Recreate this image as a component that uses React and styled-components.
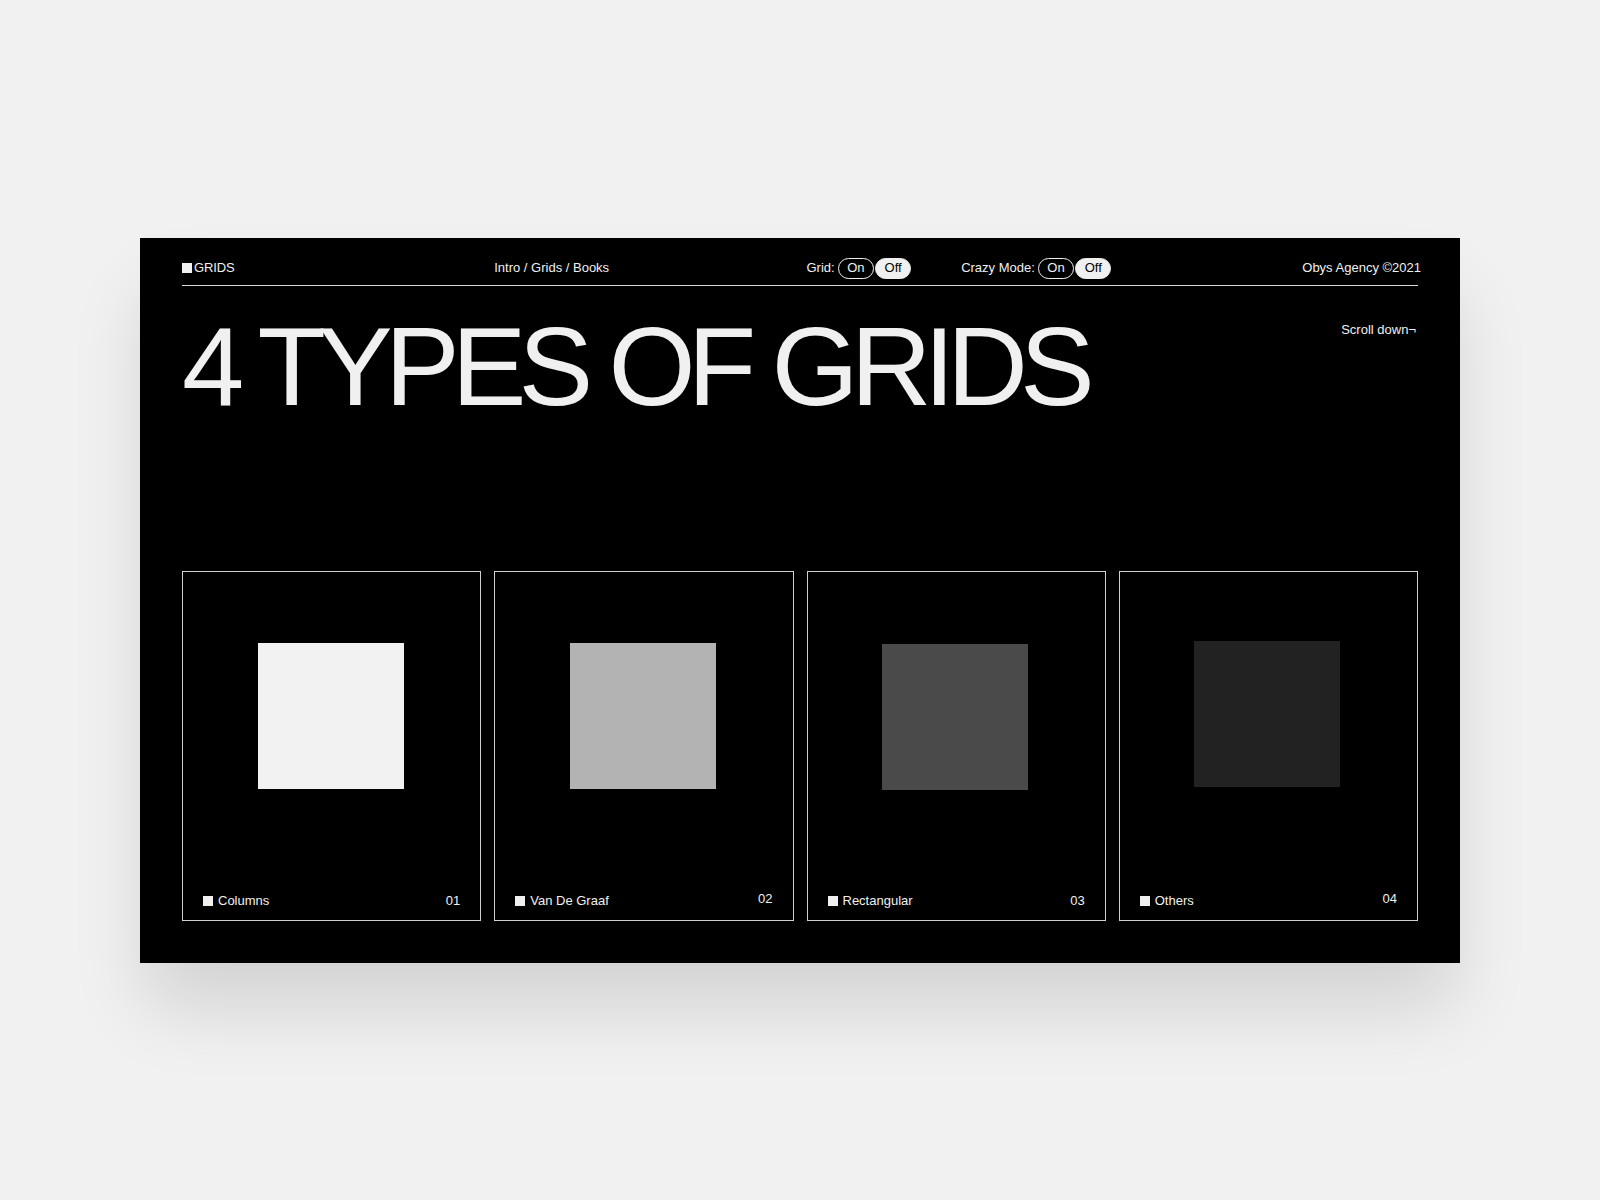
import React from "react";
import styled, { createGlobalStyle } from "styled-components";

const GlobalStyle = createGlobalStyle`
  html, body {
    margin: 0;
    padding: 0;
    background: #f1f1f1;
  }
  body {
    font-family: "Liberation Sans", Arial, Helvetica, sans-serif;
    -webkit-font-smoothing: antialiased;
  }
`;

const Page = styled.div`
  min-height: 1200px;
  display: flex;
  align-items: center;
  justify-content: center;
`;

const Panel = styled.section`
  width: 1320px;
  height: 725px;
  box-sizing: border-box;
  background: #000;
  color: #f0f0f0;
  padding: 0 42px 42px;
  display: flex;
  flex-direction: column;
  box-shadow: 0 50px 70px -6px rgba(0, 0, 0, 0.13);
`;

const Header = styled.header`
  display: grid;
  grid-template-columns: repeat(4, minmax(0, 1fr));
  column-gap: 13px;
  align-items: center;
  padding: 20px 0 6px;
  border-bottom: 1px solid #d8d8d8;
  font-size: 13px;
  line-height: 16px;
  white-space: nowrap;
`;

const Brand = styled.div`
  display: flex;
  align-items: center;
  gap: 2px;
  letter-spacing: -0.1px;
`;

const Mark = styled.span`
  display: inline-block;
  width: ${(p) => p.$size || 10}px;
  height: ${(p) => p.$size || 10}px;
  background: #f0f0f0;
`;

const Crumbs = styled.div``;

const Toggles = styled.div`
  display: flex;
  align-items: center;
  gap: 50px;
`;

const Toggle = styled.div`
  display: flex;
  align-items: center;
  gap: 3px;
`;

const Switch = styled.div`
  display: flex;
  align-items: center;
`;

const Pill = styled.span`
  display: inline-flex;
  align-items: center;
  justify-content: center;
  box-sizing: border-box;
  height: 21px;
  padding: 0 8.5px;
  border-radius: 11px;
  border: 1.5px solid #f0f0f0;
  background: ${(p) => (p.$active ? "#f0f0f0" : "transparent")};
  color: ${(p) => (p.$active ? "#000" : "#f0f0f0")};
  margin-left: ${(p) => (p.$active ? "1px" : "0")};
`;

const Credit = styled.div`
  text-align: right;
  margin-right: -3px;
`;

const TitleRow = styled.div`
  display: flex;
  justify-content: space-between;
  align-items: flex-start;
  margin-top: 25px;
`;

const Title = styled.h1`
  margin: 0;
  font-weight: 400;
  font-size: 112px;
  line-height: 1;
  letter-spacing: -7.9px;
  color: #f0f0f0;
  white-space: nowrap;
`;

const Scroll = styled.div`
  margin-top: 11px;
  margin-right: 2px;
  font-size: 13px;
  line-height: 16px;
`;

const Cards = styled.div`
  display: grid;
  grid-template-columns: repeat(4, minmax(0, 1fr));
  column-gap: 13px;
  margin-top: auto;
`;

const Card = styled.article`
  height: 350px;
  box-sizing: border-box;
  border: 1.5px solid #cfcfcf;
  padding: 71px 20px 11px;
  display: flex;
  flex-direction: column;
`;

const Swatch = styled.div`
  align-self: center;
  width: 146px;
  height: 146px;
  background: ${(p) => p.$color};
  transform: translate(-1px, ${(p) => p.$shift || 0}px);
`;

const Label = styled.div`
  margin-top: auto;
  display: flex;
  align-items: center;
  justify-content: space-between;
  font-size: 13px;
  line-height: 16px;
`;

const Name = styled.span`
  display: flex;
  align-items: center;
  gap: 5px;
`;

const Num = styled.span`
  transform: translateY(${(p) => (p.$raise ? -2 : 0)}px);
`;

const cards = [
  { name: "Columns", num: "01", color: "#f2f2f2", shift: 0, raise: false },
  { name: "Van De Graaf", num: "02", color: "#b3b3b3", shift: 0, raise: true },
  { name: "Rectangular", num: "03", color: "#4a4a4a", shift: 1, raise: false },
  { name: "Others", num: "04", color: "#222222", shift: -2, raise: true },
];

export default function App() {
  return (
    <>
      <GlobalStyle />
      <Page>
        <Panel>
          <Header>
            <Brand>
              <Mark $size={10} />
              GRIDS
            </Brand>
            <Crumbs>Intro / Grids / Books</Crumbs>
            <Toggles>
              <Toggle>
                Grid:
                <Switch>
                  <Pill>On</Pill>
                  <Pill $active>Off</Pill>
                </Switch>
              </Toggle>
              <Toggle>
                Crazy Mode:
                <Switch>
                  <Pill>On</Pill>
                  <Pill $active>Off</Pill>
                </Switch>
              </Toggle>
            </Toggles>
            <Credit>Obys Agency ©2021</Credit>
          </Header>

          <TitleRow>
            <Title>4 TYPES OF GRIDS</Title>
            <Scroll>Scroll down¬</Scroll>
          </TitleRow>

          <Cards>
            {cards.map((c) => (
              <Card key={c.num}>
                <Swatch $color={c.color} $shift={c.shift} />
                <Label>
                  <Name>
                    <Mark $size={10} />
                    {c.name}
                  </Name>
                  <Num $raise={c.raise}>{c.num}</Num>
                </Label>
              </Card>
            ))}
          </Cards>
        </Panel>
      </Page>
    </>
  );
}
